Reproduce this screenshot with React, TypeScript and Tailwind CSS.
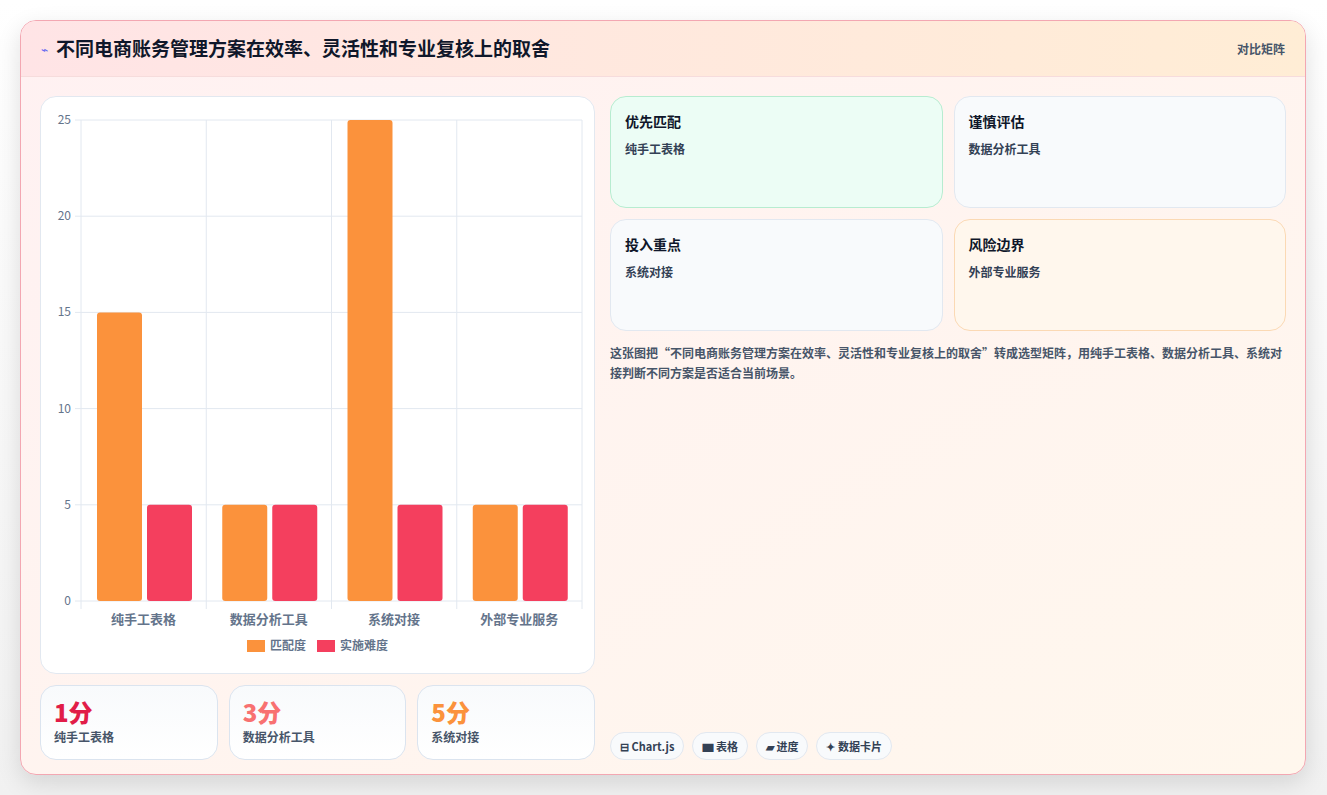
import React from "react";

const cats = ["纯手工表格", "数据分析工具", "系统对接", "外部专业服务"];
const a = [15, 5, 25, 5];
const b = [5, 5, 5, 5];

function Chart() {
  const W = 553, H = 578;
  const x0 = 40, x1 = 541, y0 = 504, y1 = 23;
  const sy = (v: number) => y0 - (v / 25) * (y0 - y1);
  const cw = (x1 - x0) / 4;
  return (
    <svg width={W} height={H} className="block">
      {[0, 5, 10, 15, 20, 25].map((v) => (
        <g key={v}>
          <line x1={x0 - 6} x2={x1} y1={sy(v)} y2={sy(v)} stroke="#e2e8f0" />
          <text x={30} y={sy(v) + 4} textAnchor="end" fontSize="12" fill="#64748b">{v}</text>
        </g>
      ))}
      {[0, 1, 2, 3, 4].map((i) => (
        <line key={i} x1={x0 + i * cw} x2={x0 + i * cw} y1={y1} y2={y0 + 8} stroke="#e2e8f0" />
      ))}
      {cats.map((c, i) => {
        const cx = x0 + i * cw + 16;
        return (
          <g key={c}>
            <rect x={cx} y={sy(a[i])} width={45} height={y0 - sy(a[i])} rx={3} fill="#fb923c" />
            <rect x={cx + 50} y={sy(b[i])} width={45} height={y0 - sy(b[i])} rx={3} fill="#f43f5e" />
            <text x={x0 + i * cw + cw / 2} y={527} textAnchor="middle" fontSize="13" fontWeight="600" fill="#64748b">{c}</text>
          </g>
        );
      })}
      <rect x={206} y={543} width={18} height={12} fill="#fb923c" />
      <text x={229} y={553} fontSize="12" fontWeight="600" fill="#64748b">匹配度</text>
      <rect x={276} y={543} width={18} height={12} fill="#f43f5e" />
      <text x={299} y={553} fontSize="12" fontWeight="600" fill="#64748b">实施难度</text>
    </svg>
  );
}

function Card({ t, s, c }: { t: string; s: string; c: string }) {
  return (
    <div className={`h-[112px] rounded-2xl border px-[14px] py-[14px] ${c}`}>
      <div className="text-[14px] font-bold text-[#0f172a]">{t}</div>
      <div className="mt-[8px] text-[12px] font-semibold text-[#334155]">{s}</div>
    </div>
  );
}

function Stat({ n, s, c }: { n: string; s: string; c: string }) {
  return (
    <div className="flex-1 h-[75px] rounded-2xl border border-[#dbe4ef] bg-gradient-to-b from-[#f8fafc] to-white px-[13px] pt-[10px]">
      <div className={`text-[24px] font-black leading-[32px] ${c}`}>{n}</div>
      <div className="text-[12px] font-semibold text-[#475569]">{s}</div>
    </div>
  );
}

export default function App() {
  return (
    <div className="w-[1327px] h-[795px] bg-gradient-to-b from-white to-[#f1f1f1] p-[20px] pr-[21px]" style={{ fontFamily: '"Noto Sans CJK SC", "Noto Sans", sans-serif' }}>
      <div className="h-[755px] rounded-2xl border border-[#f3a7b2] bg-gradient-to-br from-[#fff1f2] to-[#fff7ed] shadow-[0_8px_24px_rgba(0,0,0,0.12)] overflow-hidden flex flex-col">
        <div className="h-[56px] shrink-0 flex items-center justify-between px-[20px] bg-gradient-to-r from-[#ffe4e6] to-[#ffedd5] border-b border-[#f6dcdc]">
          <div className="flex items-center gap-[8px]">
            <span className="text-[#6366f1] text-[12px]">⌁</span>
            <span className="text-[19px] font-bold text-[#0f172a]">不同电商账务管理方案在效率、灵活性和专业复核上的取舍</span>
          </div>
          <span className="text-[12px] font-semibold text-[#475569]">对比矩阵</span>
        </div>
        <div className="flex-1 flex gap-[15px] p-[19px]">
          <div className="w-[555px] flex flex-col gap-[11px]">
            <div className="h-[578px] rounded-2xl border border-[#e2e8f0] bg-white overflow-hidden"><Chart /></div>
            <div className="flex gap-[11px]">
              <Stat n="1分" s="纯手工表格" c="text-[#e11d48]" />
              <Stat n="3分" s="数据分析工具" c="text-[#f87171]" />
              <Stat n="5分" s="系统对接" c="text-[#fb923c]" />
            </div>
          </div>
          <div className="flex-1 flex flex-col">
            <div className="grid grid-cols-2 gap-[11px]">
              <Card t="优先匹配" s="纯手工表格" c="bg-[#ecfdf5] border-[#b7ecd0]" />
              <Card t="谨慎评估" s="数据分析工具" c="bg-[#f8fafc] border-[#e2e8f0]" />
              <Card t="投入重点" s="系统对接" c="bg-[#f8fafc] border-[#e2e8f0]" />
              <Card t="风险边界" s="外部专业服务" c="bg-[#fff7ed] border-[#fbd9b4]" />
            </div>
            <p className="mt-[12px] text-[12px] font-semibold leading-[20px] text-[#475569]">这张图把“不同电商账务管理方案在效率、灵活性和专业复核上的取舍”转成选型矩阵，用纯手工表格、数据分析工具、系统对接判断不同方案是否适合当前场景。</p>
            <div className="mt-auto flex gap-[8px]">
              {["⊟ Chart.js", "▆ 表格", "▰ 进度", "✦ 数据卡片"].map((t) => (
                <span key={t} className="h-[28px] px-[9px] flex items-center rounded-full border border-[#e2e8f0] bg-[#f8fafc] text-[11px] font-bold text-[#334155]">{t}</span>
              ))}
            </div>
          </div>
        </div>
      </div>
    </div>
  );
}
